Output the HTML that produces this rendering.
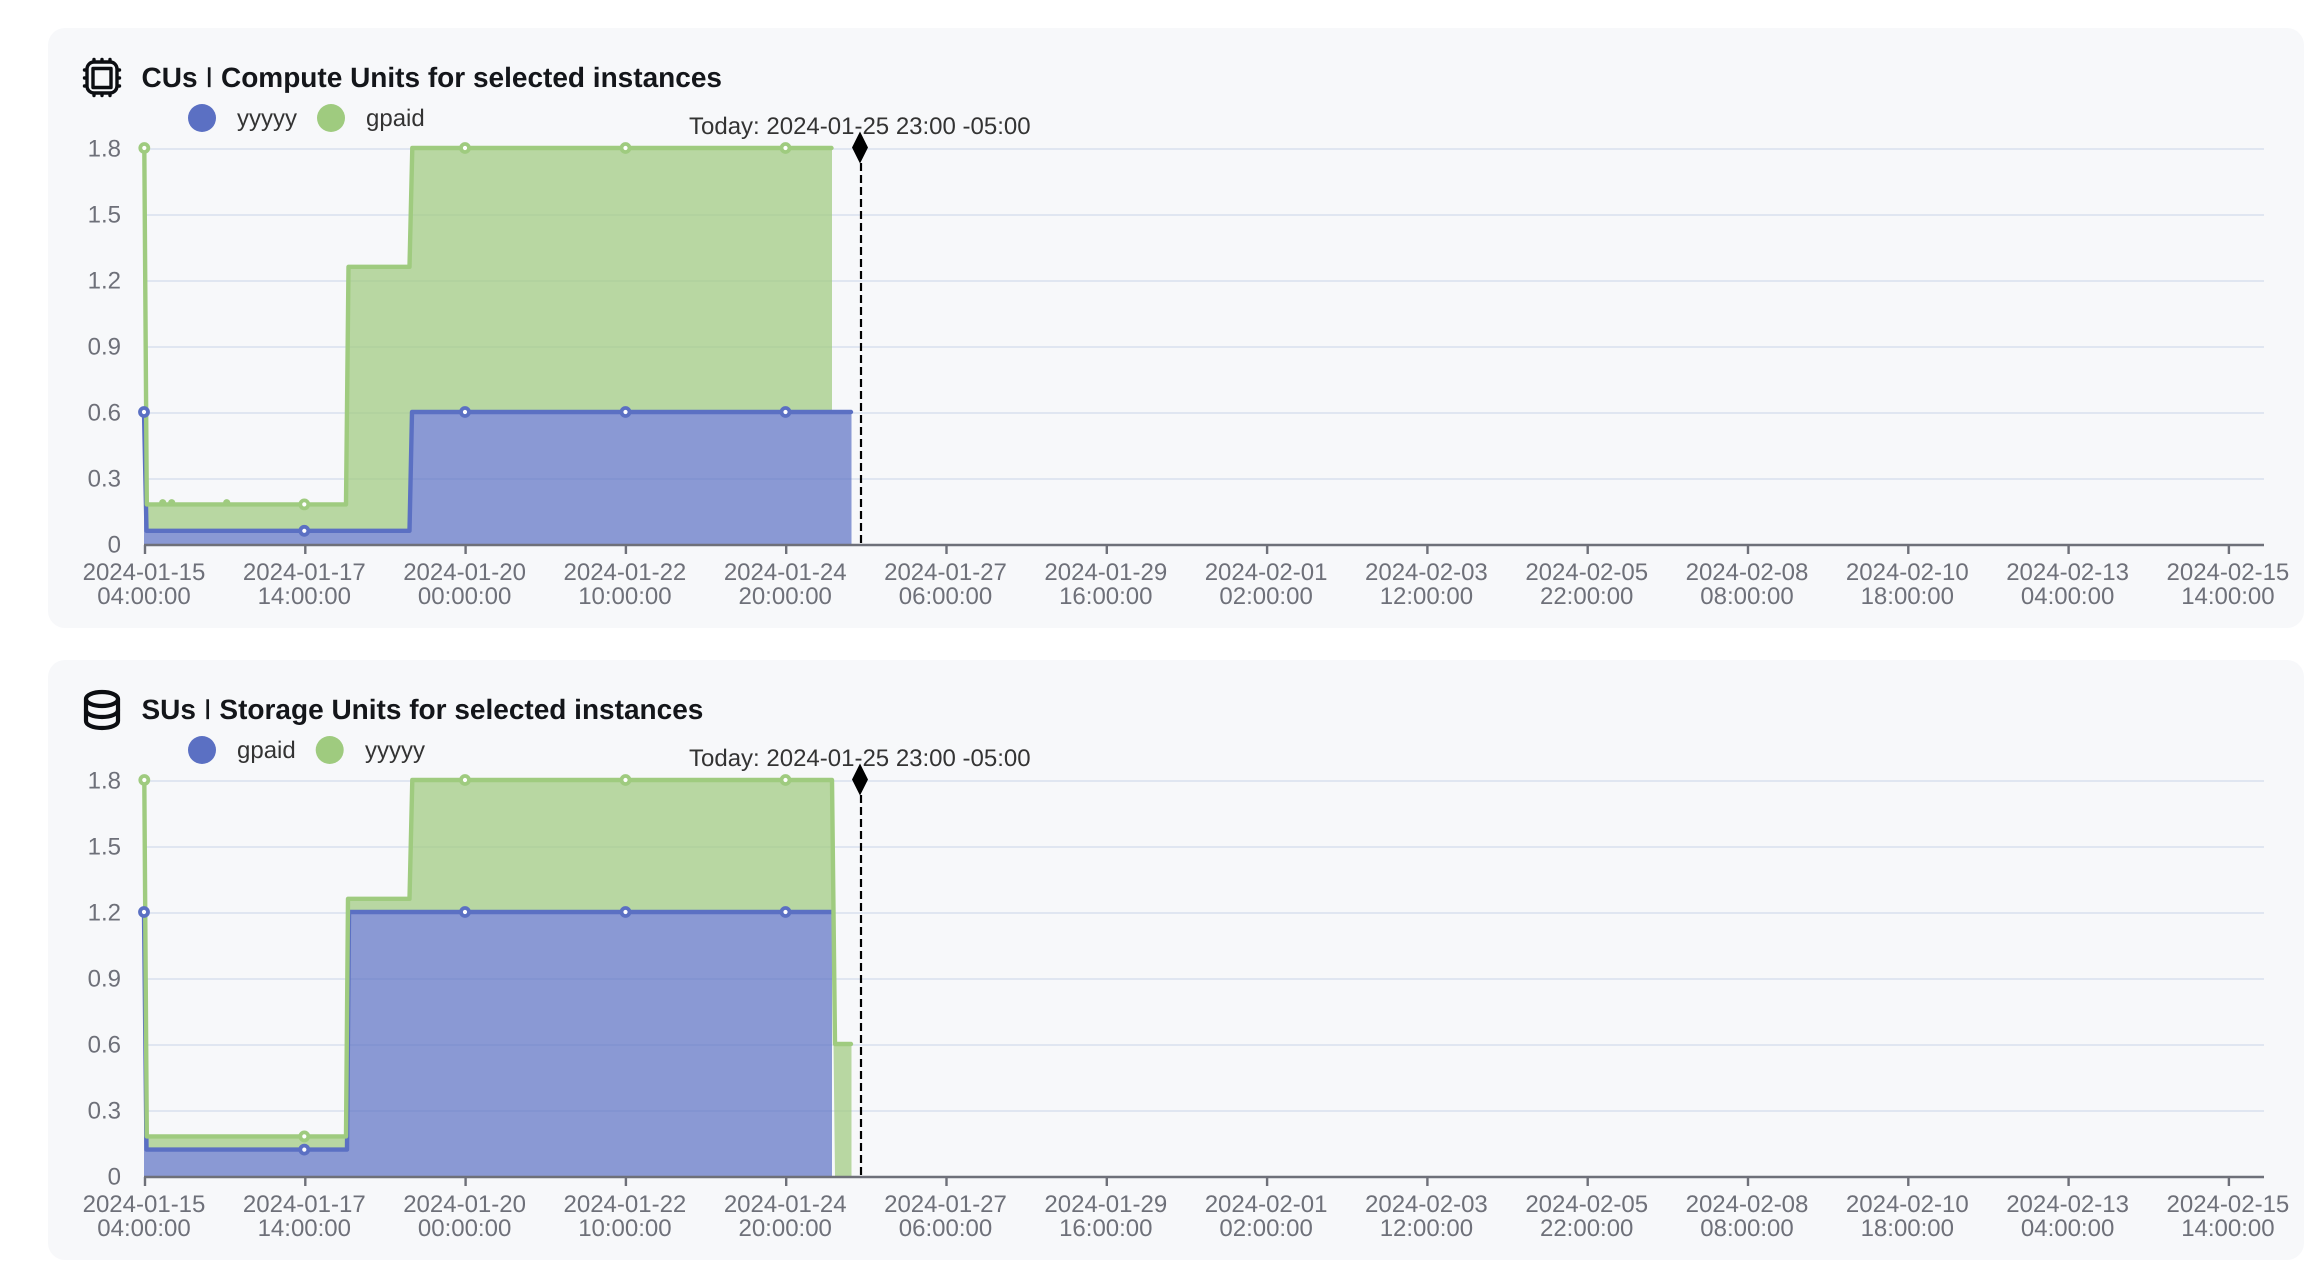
<!DOCTYPE html>
<html lang="en">
<head>
<meta charset="utf-8">
<title>CUs and SUs</title>
<style>
html,body{margin:0;padding:0;background:#fff;width:2324px;height:1288px;overflow:hidden}
svg{display:block;position:absolute;left:0;top:0}
text{font-family:"Liberation Sans",Arial,sans-serif;text-rendering:geometricPrecision}
.t{font-size:28px;font-weight:700;fill:#14161a}
.p{font-size:21px;font-weight:700}
.l{font-size:24px;fill:#333}
.y{font-size:24px;fill:#6E7079;text-anchor:end}
.x{font-size:24px;fill:#6E7079;text-anchor:middle}
.g{stroke:#E0E6F1;stroke-width:2;fill:none}
.a{stroke:#6E7079;stroke-width:2.4;fill:none}
.lb{stroke:#5B70C3;stroke-width:4.4;fill:none;stroke-linejoin:round;stroke-linecap:round}
.lg{stroke:#9FCB7F;stroke-width:4.4;fill:none;stroke-linejoin:round;stroke-linecap:round}
.fb{fill:#5B70C3;opacity:.7}
.fg{fill:#9FCB7F;opacity:.72}
.mb{fill:#fff;stroke:#5B70C3;stroke-width:3.8}
.mg{fill:#fff;stroke:#9FCB7F;stroke-width:3.8}
.d{stroke:#000;stroke-width:2.2;stroke-dasharray:8 4;fill:none}
.i{fill:none;stroke:#0c0e12;stroke-width:3.4;stroke-linecap:round;stroke-linejoin:round}
</style>
</head>
<body>
<svg width="2324" height="1288" viewBox="0 0 2324 1288" xmlns="http://www.w3.org/2000/svg">
<rect x="48" y="28" width="2256" height="600" rx="17" fill="#F7F8FA"/>
<rect x="48" y="660" width="2256" height="600" rx="17" fill="#F7F8FA"/>

<!-- Chart 1 -->
<g class="i">
<rect x="87" y="62" width="30" height="31" rx="7"/>
<rect x="93" y="68.5" width="18" height="19"/>
<path d="M94 60v-.5M102 60v-.5M110 60v-.5M94 95v.5M102 95v.5M110 95v.5M85 70h-.5M85 78h-.5M85 86h-.5M119 70h.5M119 78h.5M119 86h.5"/>
</g>
<text class="t" x="141.5" y="87">CUs <tspan class="p" dx="1" dy="-4.4">|</tspan><tspan dx="1" dy="4.4"> Compute Units for selected instances</tspan></text>
<circle cx="202" cy="118" r="14" fill="#5B70C3"/>
<text class="l" x="237" y="126">yyyyy</text>
<circle cx="331" cy="118" r="14" fill="#9FCB7F"/>
<text class="l" x="366" y="126">gpaid</text>
<text class="l" x="689" y="134">Today: 2024-01-25 23:00 -05:00</text>

<path class="g" d="M145 149H2264M145 215H2264M145 281H2264M145 347H2264M145 413H2264M145 479H2264"/>
<polygon class="fg" points="144.3,148 412.3,148 832,148 832,412 412,412 409.5,530.8 146.5,530.8 144,412 146.5,504.4 346,504.4 348.5,266.8 409.5,266.8 412.3,148"/>
<polygon class="fb" points="144,412 146.5,530.8 409.5,530.8 412,412 851.5,412 851.5,544 144,544"/>
<path class="lb" d="M144 412L146.5 530.8H409.5L412 412H851"/>
<path class="lg" d="M144.3 148L146.8 504.4H346L348.5 266.8H409.5L412.3 148H831.5"/>
<g fill="#9FCB7F"><circle cx="162.7" cy="502.6" r="3.5"/><circle cx="171.7" cy="502.6" r="3.5"/><circle cx="226.7" cy="502.6" r="3.5"/></g>
<g class="mb"><circle cx="144" cy="412" r="4"/><circle cx="304.3" cy="530.8" r="4"/><circle cx="465" cy="412" r="4"/><circle cx="625.5" cy="412" r="4"/><circle cx="785.5" cy="412" r="4"/></g>
<g class="mg"><circle cx="144.3" cy="148" r="4"/><circle cx="304.3" cy="504.4" r="4"/><circle cx="465" cy="148" r="4"/><circle cx="625.5" cy="148" r="4"/><circle cx="785.5" cy="148" r="4"/></g>
<path class="a" d="M144 545H2264M145 545v9M305.3 545v9M465.6 545v9M625.9 545v9M786.2 545v9M946.5 545v9M1106.8 545v9M1267.1 545v9M1427.4 545v9M1587.7 545v9M1748 545v9M1908.3 545v9M2068.6 545v9M2228.9 545v9"/>
<path class="d" d="M861 163V544"/>
<path d="M860 131.5L868 147.5L860 163.5L852 147.5Z" fill="#000"/>
<text class="y" x="121" y="156.5">1.8</text>
<text class="y" x="121" y="222.5">1.5</text>
<text class="y" x="121" y="288.5">1.2</text>
<text class="y" x="121" y="354.5">0.9</text>
<text class="y" x="121" y="420.5">0.6</text>
<text class="y" x="121" y="486.5">0.3</text>
<text class="y" x="121" y="552.5">0</text>
<g class="x">
<text class="x" x="144" y="580">2024-01-15</text><text class="x" x="144" y="604">04:00:00</text>
<text class="x" x="304.3" y="580">2024-01-17</text><text class="x" x="304.3" y="604">14:00:00</text>
<text class="x" x="464.6" y="580">2024-01-20</text><text class="x" x="464.6" y="604">00:00:00</text>
<text class="x" x="624.9" y="580">2024-01-22</text><text class="x" x="624.9" y="604">10:00:00</text>
<text class="x" x="785.2" y="580">2024-01-24</text><text class="x" x="785.2" y="604">20:00:00</text>
<text class="x" x="945.5" y="580">2024-01-27</text><text class="x" x="945.5" y="604">06:00:00</text>
<text class="x" x="1105.8" y="580">2024-01-29</text><text class="x" x="1105.8" y="604">16:00:00</text>
<text class="x" x="1266.1" y="580">2024-02-01</text><text class="x" x="1266.1" y="604">02:00:00</text>
<text class="x" x="1426.4" y="580">2024-02-03</text><text class="x" x="1426.4" y="604">12:00:00</text>
<text class="x" x="1586.7" y="580">2024-02-05</text><text class="x" x="1586.7" y="604">22:00:00</text>
<text class="x" x="1747" y="580">2024-02-08</text><text class="x" x="1747" y="604">08:00:00</text>
<text class="x" x="1907.3" y="580">2024-02-10</text><text class="x" x="1907.3" y="604">18:00:00</text>
<text class="x" x="2067.6" y="580">2024-02-13</text><text class="x" x="2067.6" y="604">04:00:00</text>
<text class="x" x="2227.9" y="580">2024-02-15</text><text class="x" x="2227.9" y="604">14:00:00</text>
</g>

<!-- Chart 2 -->
<g class="i" style="stroke-width:4.2">
<ellipse cx="102" cy="699" rx="16" ry="7"/>
<path d="M86 699V721C86 725 93 728 102 728C111 728 118 725 118 721V699"/>
<path d="M86 710C86 714 93 717 102 717C111 717 118 714 118 710"/>
</g>
<text class="t" x="141.5" y="719">SUs <tspan class="p" dx="1" dy="-4.4">|</tspan><tspan dx="1" dy="4.4"> Storage Units for selected instances</tspan></text>
<circle cx="202" cy="750" r="14" fill="#5B70C3"/>
<text class="l" x="237" y="758">gpaid</text>
<circle cx="329.7" cy="750" r="14" fill="#9FCB7F"/>
<text class="l" x="365" y="758">yyyyy</text>
<text class="l" x="689" y="766">Today: 2024-01-25 23:00 -05:00</text>

<path class="g" d="M145 781H2264M145 847H2264M145 913H2264M145 979H2264M145 1045H2264M145 1111H2264"/>
<polygon class="fg" points="146.5,1136.4 346,1136.4 348,898.8 409.5,898.8 412.3,780 832,780 835,1044 851.5,1044 851.5,1176 835,1176 832,912 349,912 347,1149.6 146.5,1149.6"/>
<polygon class="fb" points="144,912 146.5,1149.6 347,1149.6 349,912 832,912 832,1176 144,1176"/>
<path class="lb" d="M144 912L146.5 1149.6H347L349 912H831.5"/>
<path class="lg" d="M144.3 780L146.8 1136.4H346L348 898.8H409.5L412.3 780H832L835 1044H851"/>
<g class="mb"><circle cx="144" cy="912" r="4"/><circle cx="304.3" cy="1149.6" r="4"/><circle cx="465" cy="912" r="4"/><circle cx="625.5" cy="912" r="4"/><circle cx="785.5" cy="912" r="4"/></g>
<g class="mg"><circle cx="144.3" cy="780" r="4"/><circle cx="304.3" cy="1136.4" r="4"/><circle cx="465" cy="780" r="4"/><circle cx="625.5" cy="780" r="4"/><circle cx="785.5" cy="780" r="4"/></g>
<path class="a" d="M144 1177H2264M145 1177v9M305.3 1177v9M465.6 1177v9M625.9 1177v9M786.2 1177v9M946.5 1177v9M1106.8 1177v9M1267.1 1177v9M1427.4 1177v9M1587.7 1177v9M1748 1177v9M1908.3 1177v9M2068.6 1177v9M2228.9 1177v9"/>
<path class="d" d="M861 795V1176"/>
<path d="M860 763.5L868 779.5L860 795.5L852 779.5Z" fill="#000"/>
<text class="y" x="121" y="788.5">1.8</text>
<text class="y" x="121" y="854.5">1.5</text>
<text class="y" x="121" y="920.5">1.2</text>
<text class="y" x="121" y="986.5">0.9</text>
<text class="y" x="121" y="1052.5">0.6</text>
<text class="y" x="121" y="1118.5">0.3</text>
<text class="y" x="121" y="1184.5">0</text>
<g class="x">
<text class="x" x="144" y="1212">2024-01-15</text><text class="x" x="144" y="1236">04:00:00</text>
<text class="x" x="304.3" y="1212">2024-01-17</text><text class="x" x="304.3" y="1236">14:00:00</text>
<text class="x" x="464.6" y="1212">2024-01-20</text><text class="x" x="464.6" y="1236">00:00:00</text>
<text class="x" x="624.9" y="1212">2024-01-22</text><text class="x" x="624.9" y="1236">10:00:00</text>
<text class="x" x="785.2" y="1212">2024-01-24</text><text class="x" x="785.2" y="1236">20:00:00</text>
<text class="x" x="945.5" y="1212">2024-01-27</text><text class="x" x="945.5" y="1236">06:00:00</text>
<text class="x" x="1105.8" y="1212">2024-01-29</text><text class="x" x="1105.8" y="1236">16:00:00</text>
<text class="x" x="1266.1" y="1212">2024-02-01</text><text class="x" x="1266.1" y="1236">02:00:00</text>
<text class="x" x="1426.4" y="1212">2024-02-03</text><text class="x" x="1426.4" y="1236">12:00:00</text>
<text class="x" x="1586.7" y="1212">2024-02-05</text><text class="x" x="1586.7" y="1236">22:00:00</text>
<text class="x" x="1747" y="1212">2024-02-08</text><text class="x" x="1747" y="1236">08:00:00</text>
<text class="x" x="1907.3" y="1212">2024-02-10</text><text class="x" x="1907.3" y="1236">18:00:00</text>
<text class="x" x="2067.6" y="1212">2024-02-13</text><text class="x" x="2067.6" y="1236">04:00:00</text>
<text class="x" x="2227.9" y="1212">2024-02-15</text><text class="x" x="2227.9" y="1236">14:00:00</text>
</g>
</svg>
</body>
</html>
